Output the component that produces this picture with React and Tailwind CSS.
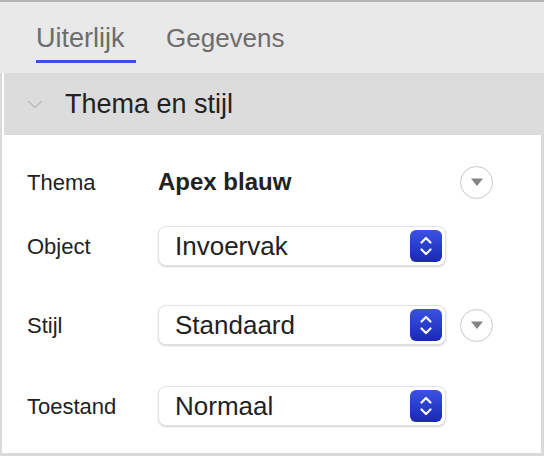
import React from "react";

const FONT = { fontFamily: '"Liberation Sans", Arial, sans-serif' };

const Stepper = () => (
    <div className="w-8 h-8 rounded-[6px] bg-gradient-to-b from-[#3b52e2] to-[#1a27b5] flex items-center justify-center">
        <svg width="14" height="22" viewBox="0 0 14 22" fill="none" stroke="white" strokeWidth="2.2" strokeLinecap="round" strokeLinejoin="round">
            <path d="M2.5 7.5 L7 3 L11.5 7.5" />
            <path d="M2.5 14.5 L7 19 L11.5 14.5" />
        </svg>
    </div>
);

const Select = ({ value }) => (
    <div className="w-[288px] h-10 bg-white rounded-[8px] border border-[#e2e2e2] shadow-[0_1px_2px_rgba(0,0,0,0.18)] flex items-center justify-between pl-4 pr-[3px]">
        <span className="text-[26px] text-[#222]">{value}</span>
        <Stepper />
    </div>
);

const RoundDrop = () => (
    <div className="w-[33px] h-[33px] rounded-full border-[1.5px] border-[#c9c9c9] flex items-center justify-center">
        <svg width="14" height="10" viewBox="0 0 14 10">
            <path d="M1 1.5 H13 L7 9 Z" fill="#858585" />
        </svg>
    </div>
);

const Row = ({ label, children, extra, className = "" }) => (
    <div className={"flex items-center h-10 " + className}>
        <div className="w-[131px] text-[22px] text-[#222]">{label}</div>
        <div className="w-[288px]">{children}</div>
        {extra && <div className="ml-[14px]">{extra}</div>}
    </div>
);

export default function App() {
    return (
        <div className="w-[544px] h-[456px] bg-white border-t-2 border-[#b3b3b3] flex flex-col" style={FONT}>
            {/* tabs */}
            <div className="h-[71px] bg-[#e9e9e9] flex items-start gap-[30px] pl-9 pt-[20px]">
                <div className="flex flex-col items-start">
                    <span className="text-[27px] text-[#6d6d6d] leading-[32px]">Uiterlijk</span>
                    <div className="w-[100px] h-[3px] bg-[#3b4fdc] mt-[6px]" />
                </div>
                <span className="text-[26px] text-[#6d6d6d] leading-[32px]">Gegevens</span>
            </div>

            <div className="flex-1 flex flex-col border-l-2 border-r-[3px] border-b-[3px] border-[#dadada]">
                {/* section header */}
                <div className="h-[62px] ml-[2px] -mr-[3px] bg-[#dcdcdc] flex items-center pl-[23px]">
                    <svg width="16" height="9" viewBox="0 0 16 9" fill="none" stroke="#bcbcbc" strokeWidth="1.6" strokeLinecap="round" strokeLinejoin="round">
                        <path d="M1.5 1.5 L8 7.5 L14.5 1.5" />
                    </svg>
                    <span className="ml-[22px] text-[27px] text-[#222]">Thema en stijl</span>
                </div>

                <div className="flex flex-col pl-[25px] pt-[27px]">
                    <Row label="Thema" extra={<RoundDrop />}>
                        <span className="text-[24px] font-bold text-[#222]">Apex blauw</span>
                    </Row>
                    <Row label="Object" className="mt-6">
                        <Select value="Invoervak" />
                    </Row>
                    <Row label="Stijl" className="mt-[39px]" extra={<RoundDrop />}>
                        <Select value="Standaard" />
                    </Row>
                    <Row label="Toestand" className="mt-[41px]">
                        <Select value="Normaal" />
                    </Row>
                </div>
            </div>
        </div>
    );
}
